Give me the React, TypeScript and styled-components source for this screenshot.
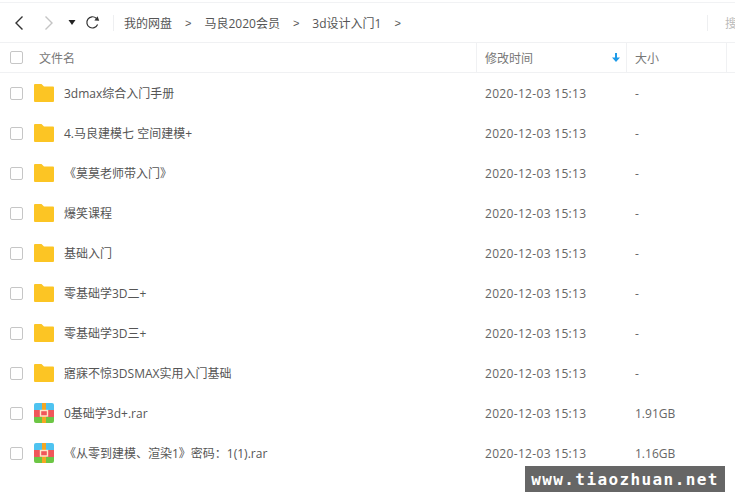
import React from "react";
import styled, { createGlobalStyle } from "styled-components";

const GlobalStyle = createGlobalStyle`
  html, body {
    margin: 0;
    padding: 0;
    background: #fff;
    overflow: hidden;
  }
`;

type FileItem = { name: string; size: string; kind: "folder" | "rar" };

const files: FileItem[] = [
  { name: "3dmax综合入门手册", size: "-", kind: "folder" },
  { name: "4.马良建模七 空间建模+", size: "-", kind: "folder" },
  { name: "《莫莫老师带入门》", size: "-", kind: "folder" },
  { name: "爆笑课程", size: "-", kind: "folder" },
  { name: "基础入门", size: "-", kind: "folder" },
  { name: "零基础学3D二+", size: "-", kind: "folder" },
  { name: "零基础学3D三+", size: "-", kind: "folder" },
  { name: "寤寐不惊3DSMAX实用入门基础", size: "-", kind: "folder" },
  { name: "0基础学3d+.rar", size: "1.91GB", kind: "rar" },
  { name: "《从零到建模、渲染1》密码：1(1).rar", size: "1.16GB", kind: "rar" },
];

const crumbs = ["我的网盘", "马良2020会员", "3d设计入门1"];

const FolderIcon = () => (
  <svg width="20" height="18" viewBox="0 0 20 18">
    <path
      d="M1 0h6.5l2.5 2.5h9a1 1 0 0 1 1 1V17a1 1 0 0 1-1 1H1a1 1 0 0 1-1-1V1a1 1 0 0 1 1-1z"
      fill="#fcc524"
    />
  </svg>
);

const RarIcon = () => (
  <svg width="20" height="20" viewBox="0 0 20 20">
    <path d="M2 0h16a2 2 0 0 1 2 2v5H0V2a2 2 0 0 1 2-2z" fill="#4fc3f0" />
    <rect y="7" width="20" height="7" fill="#f0565a" />
    <path d="M0 14h20v4a2 2 0 0 1-2 2H2a2 2 0 0 1-2-2z" fill="#6cc644" />
    <rect x="8" width="4" height="20" fill="#f5a623" />
    <rect x="6.5" y="7.5" width="7" height="5.5" fill="#f0565a" stroke="#fde9c8" strokeWidth="1.4" />
  </svg>
);

const App: React.FC = () => {
  return (
    <Page>
      <GlobalStyle />
      <Toolbar>
        <NavIcons>
          <NavButton aria-label="back">
            <svg width="10" height="16" viewBox="0 0 10 16">
              <path d="M8.5 1.5 2 8l6.5 6.5" fill="none" stroke="#333" strokeWidth="1.4" />
            </svg>
          </NavButton>
          <NavButton aria-label="forward" $offset={20}>
            <svg width="10" height="16" viewBox="0 0 10 16">
              <path d="M1.5 1.5 8 8l-6.5 6.5" fill="none" stroke="#c4c4c4" strokeWidth="1.4" />
            </svg>
          </NavButton>
          <NavButton aria-label="history" $offset={14}>
            <svg width="8" height="5" viewBox="0 0 8 5">
              <path d="M0.5 0h7L4 5z" fill="#222" />
            </svg>
          </NavButton>
          <NavButton aria-label="refresh" $offset={9}>
            <svg width="15" height="15" viewBox="0 0 15 15">
              <path
                d="M12.6 9.6A5.6 5.6 0 1 1 11.2 3.2"
                fill="none"
                stroke="#333"
                strokeWidth="1.2"
              />
              <path d="M9.4 5.6 14.2 5.8 12.6 1.2z" fill="#333" />
            </svg>
          </NavButton>
        </NavIcons>
        <ToolbarDivider />
        <Breadcrumbs>
          {crumbs.map((crumb) => (
            <Crumb key={crumb}>
              <span>{crumb}</span>
              <CrumbArrow>&gt;</CrumbArrow>
            </Crumb>
          ))}
        </Breadcrumbs>
        <SearchArea>
          <Divider />
          <SearchHint>搜</SearchHint>
        </SearchArea>
      </Toolbar>
      <HeaderRow>
        <CheckCell>
          <CheckBox />
        </CheckCell>
        <NameHead>文件名</NameHead>
        <DateHead>
          修改时间
          <svg width="8" height="9" viewBox="0 0 8 9">
            <path d="M3 0h2v4.5h3L4 9 0 4.5h3z" fill="#1e9be8" />
          </svg>
        </DateHead>
        <SizeHead>大小</SizeHead>
      </HeaderRow>
      {files.map((file) => (
        <FileRow key={file.name}>
          <CheckCell>
            <CheckBox />
          </CheckCell>
          <IconCell>{file.kind === "folder" ? <FolderIcon /> : <RarIcon />}</IconCell>
          <FileName>{file.name}</FileName>
          <FileDate>2020-12-03 15:13</FileDate>
          <FileSize>{file.size}</FileSize>
        </FileRow>
      ))}
      <Watermark>www.tiaozhuan.net</Watermark>
    </Page>
  );
};

const Page = styled.div`
  position: relative;
  width: 735px;
  height: 499px;
  overflow: hidden;
  background: #fff;
  padding-top: 2px;
  box-sizing: border-box;
  color: #424e67;
  font-family: "Open Sans", "Noto Sans CJK SC", sans-serif;
`;

const Toolbar = styled.div`
  display: flex;
  align-items: center;
  height: 41px;
  box-sizing: border-box;
  border-top: 1px solid #f1f2f4;
  border-bottom: 1px solid #f0f1f3;
  padding-left: 14px;
`;

const NavIcons = styled.div`
  display: flex;
  align-items: center;
`;

const NavButton = styled.div<{ $offset?: number }>`
  display: flex;
  align-items: center;
  margin-left: ${(props) => props.$offset ?? 0}px;
`;

const Divider = styled.div`
  width: 1px;
  height: 16px;
  background: #eeeff1;
`;

const ToolbarDivider = styled(Divider)`
  margin-left: 13px;
`;

const Breadcrumbs = styled.div`
  display: flex;
  margin-left: 10px;
  font-size: 12px;
  color: #555;
`;

const Crumb = styled.div`
  display: flex;
  align-items: center;
`;

const CrumbArrow = styled.span`
  margin: 0 13px 0 13px;
  font-family: "Liberation Sans", sans-serif;
  font-size: 11px;
`;

const SearchArea = styled.div`
  display: flex;
  align-items: center;
  margin-left: auto;
  margin-right: -2px;
  gap: 17px;
`;

const SearchHint = styled.span`
  font-size: 12px;
  color: #bbb;
`;

const HeaderRow = styled.div`
  display: flex;
  align-items: center;
  height: 30px;
  box-sizing: border-box;
  border-bottom: 1px solid #f0f1f3;
  font-size: 12px;
  color: #777;
`;

const CheckCell = styled.div`
  display: flex;
  width: 39px;
  padding-left: 10px;
  box-sizing: border-box;
`;

const CheckBox = styled.div`
  width: 13px;
  height: 13px;
  box-sizing: border-box;
  border: 1px solid #c6c6c6;
  border-radius: 2px;
  background: #fff;
`;

const NameHead = styled.div`
  width: 437px;
`;

const HeadCell = styled.div`
  display: flex;
  align-items: center;
  height: 100%;
  box-sizing: border-box;
  border-left: 1px solid #f0f1f3;
  padding-left: 8px;
`;

const DateHead = styled(HeadCell)`
  width: 150px;
  justify-content: space-between;
  padding-right: 6px;
`;

const SizeHead = styled(HeadCell)`
  width: 101px;
  border-right: 1px solid #f0f1f3;
`;

const FileRow = styled.div`
  display: flex;
  align-items: center;
  height: 40px;
  font-size: 12px;
  color: #555;
`;

const IconCell = styled.div`
  display: flex;
  width: 20px;
  margin: 0 10px 0 -5px;
`;

const FileName = styled.div`
  width: 421px;
  white-space: nowrap;
`;

const FileDate = styled.div`
  width: 150px;
  letter-spacing: 0.32px;
  color: #666;
`;

const FileSize = styled.div`
  color: #666;
`;

const Watermark = styled.div`
  position: absolute;
  left: 525px;
  top: 466px;
  width: 200px;
  height: 26px;
  display: flex;
  align-items: center;
  justify-content: center;
  background: #666;
  color: #fff;
  font-family: "DejaVu Sans Mono", monospace;
  font-size: 16px;
  font-weight: 700;
  letter-spacing: 1.4px;
  white-space: nowrap;
`;

export default App;
